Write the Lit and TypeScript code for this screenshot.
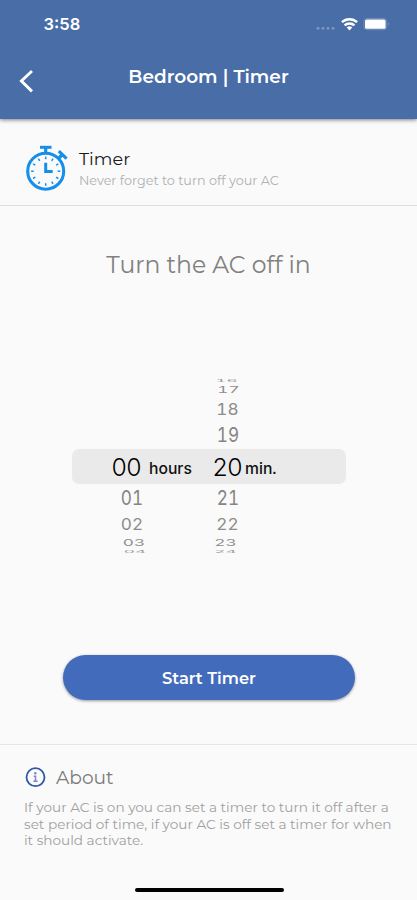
import { LitElement, html, css, svg } from "lit";
import { customElement } from "lit/decorators.js";

interface WheelItem {
  label: string;
  height: number;
  size: number;
  squash: number;
  shift: number;
  tone: string;
}

const item = (label: string, depth: number, shift = 0): WheelItem => {
  const steps = [
    { height: 28, size: 17.2, squash: 1.17, tone: "#858585" },
    { height: 24, size: 17.2, squash: 0.95, tone: "#8c8c8c" },
    { height: 14, size: 17.2, squash: 0.55, tone: "#8e8e8e" },
    { height: 4, size: 17.2, squash: 0.2, tone: "#9a9a9a" },
  ];
  return { label, shift, ...steps[depth] };
};

const minutesAbove = [item("16", 3, -1.5), item("17", 2, 0.5), item("18", 1, -0.5), item("19", 0)];
const hoursBelow = [item("01", 0), item("02", 1), item("03", 2, 2), item("04", 3, 3)];
const minutesBelow = [item("21", 0), item("22", 1, -0.5), item("23", 2, -2.5), item("24", 3, -2.5)];

@customElement("app-header")
class AppHeader extends LitElement {
  static styles = css`
    :host {
      display: block;
      height: 119px;
      background: #486da7;
      color: #fff;
      box-shadow: 0 1px 4px rgba(0, 0, 0, 0.5);
    }
    .status {
      display: flex;
      align-items: center;
      height: 48px;
      padding: 0 27px 0 43.5px;
      box-sizing: border-box;
    }
    .clock {
      flex: 1;
      font-family: Inter, "Liberation Sans", sans-serif;
      font-size: 16.5px;
      font-weight: 600;
      line-height: 20px;
    }
    .icons {
      display: block;
    }
    .bar {
      display: grid;
      grid-template-columns: 48px 1fr 48px;
      align-items: center;
      height: 56px;
    }
    .back {
      display: block;
      margin: 10px 0 0 18px;
    }
    .title {
      margin: 1px 0 0;
      text-align: center;
      font-size: 18.5px;
      font-weight: 600;
      line-height: 24px;
      white-space: nowrap;
    }
  `;
  render() {
    return html`
      <div class="status">
        <span class="clock">3:58</span>
        <svg class="icons" width="76" height="16" viewBox="0 0 76 16">
          <g fill="#fff" fill-opacity=".28">
            <circle cx="4" cy="12.3" r="1.5" /><circle cx="9" cy="12.3" r="1.5" />
            <circle cx="14" cy="12.3" r="1.5" /><circle cx="19" cy="12.3" r="1.5" />
          </g>
          <g fill="none" stroke="#fff" stroke-width="2.5">
            <path d="M27.9 6.2a11 11 0 0 1 15.2 0" />
            <path d="M30.6 9.4a7 7 0 0 1 9.8 0" />
          </g>
          <path d="M35.5 14.6l-2.8-3a4 4 0 0 1 5.6 0z" fill="#fff" />
          <rect x="49.9" y="2.5" width="22.8" height="11.2" rx="3" fill="none" stroke="#fff" stroke-opacity=".22" />
          <rect x="51" y="3.6" width="20.6" height="9.2" rx="1.6" fill="#fff" />
          <path d="M74 6.2q1.4 2 0 4z" fill="#fff" fill-opacity=".5" />
        </svg>
      </div>
      <div class="bar">
        <svg class="back" width="18" height="26" viewBox="0 0 18 26">
          <path d="M14 3 3.4 13 14 23.4" fill="none" stroke="#fff" stroke-width="2.9" />
        </svg>
        <h1 class="title">Bedroom | Timer</h1>
      </div>
    `;
  }
}

@customElement("time-wheel")
class TimeWheel extends LitElement {
  static styles = css`
    :host {
      display: block;
      font-family: Inter, "Liberation Sans", sans-serif;
      font-variant-numeric: tabular-nums;
    }
    .pair {
      display: grid;
      grid-template-columns: 60px 60px;
      column-gap: 36px;
      padding-left: 102px;
      height: 70px;
    }
    .drum {
      display: flex;
      flex-direction: column;
    }
    .item {
      display: flex;
      align-items: center;
      justify-content: center;
      line-height: 1;
    }
    .band {
      display: flex;
      align-items: center;
      height: 35px;
      margin: 0 71px 0 72px;
      border-radius: 7px;
      background: #eaeaea;
      color: #111;
      white-space: nowrap;
    }
    .value {
      width: 32px;
      font-size: 24.5px;
      font-weight: 300;
      letter-spacing: -1px;
      text-align: center;
      color: #000;
    }
    .hours {
      margin-left: 38px;
    }
    .unit {
      font-size: 15.7px;
      font-weight: 500;
      margin-top: 3px;
    }
    .unit-h {
      width: 57px;
      margin-left: 7px;
    }
    .unit-m {
      margin-left: 4px;
    }
    .minutes {
      margin-left: 5px;
      margin-right: -2px;
    }
  `;
  private drum(items: WheelItem[]) {
    return html`<div class="drum">
      ${items.map(
        (i) => html`<div
          class="item"
          style="height:${i.height}px;font-size:${i.size}px;color:${i.tone};transform:translateX(${i.shift}px) scaleY(${i.squash})"
        >
          ${i.label}
        </div>`
      )}
    </div>`;
  }
  render() {
    return html`
      <div class="pair">${this.drum([])}${this.drum(minutesAbove)}</div>
      <div class="band">
        <span class="value hours">00</span><span class="unit unit-h">hours</span>
        <span class="value minutes">20</span><span class="unit unit-m">min.</span>
      </div>
      <div class="pair">${this.drum(hoursBelow)}${this.drum(minutesBelow)}</div>
    `;
  }
}

@customElement("app-root")
class AppRoot extends LitElement {
  static styles = css`
    :host {
      display: flex;
      flex-direction: column;
      height: 900px;
      overflow: hidden;
      background: #fafafa;
      font-family: Montserrat, Inter, "Open Sans", sans-serif;
    }
    app-header,
    .intro,
    .picker,
    .about {
      flex: none;
    }
    .intro {
      display: flex;
      height: 87px;
      box-sizing: border-box;
      padding: 26px 0 0 24px;
      border-bottom: 1px solid #dedede;
    }
    .watch {
      display: block;
      flex: none;
    }
    .intro-text {
      padding: 3px 0 0 10px;
      white-space: nowrap;
    }
    .intro-title {
      font-size: 17.6px;
      line-height: 22px;
      color: #1b1b1b;
    }
    .intro-sub {
      font-size: 12.75px;
      line-height: 16px;
      margin-top: 3px;
      color: #b0b0b0;
    }
    .picker {
      height: 539px;
      box-sizing: border-box;
      padding-top: 43px;
      border-bottom: 1px solid #e6e6e6;
    }
    .prompt {
      margin: 0;
      text-align: center;
      font-size: 23.5px;
      font-weight: 400;
      line-height: 32px;
      color: #808080;
    }
    .wheel {
      margin-top: 98px;
    }
    .start {
      display: block;
      width: 292px;
      height: 45px;
      margin: 101px 0 0 63px;
      border: 0;
      border-radius: 23px;
      background: #426cbb;
      box-shadow: 0 1px 3px rgba(0, 0, 0, 0.4);
      color: #fff;
      font: 600 16.3px/20px Montserrat, Inter, sans-serif;
    }
    .about {
      padding: 20px 20px 0 24px;
      height: 143px;
      box-sizing: border-box;
    }
    .about-head {
      display: flex;
      align-items: center;
      gap: 9px;
      height: 24px;
      font-size: 18.6px;
      color: #7b7b7b;
    }
    .about-text {
      margin: 10px 0 0;
      font-size: 13.62px;
      line-height: 16.7px;
      color: #a0a0a0;
      white-space: nowrap;
    }
    .home {
      width: 149px;
      height: 4px;
      margin: 0 0 0 135px;
      border-radius: 2px;
      background: #000;
    }
  `;
  private ticks() {
    return Array.from({ length: 12 }, (_, n) => n).map(
      (n) => svg`<path d="M21.7 11.6v2.6" transform="rotate(${n * 30} 21.7 26.2)" />`
    );
  }
  render() {
    return html`
      <app-header></app-header>
      <section class="intro">
        <svg class="watch" width="45" height="50" viewBox="0 0 45 50">
          <g fill="none" stroke="#178fea">
            <circle cx="21.7" cy="26.2" r="18" stroke-width="3.1" />
            <path d="M16 2.3h11.5" stroke-width="3" />
            <path d="M21.7 3v6" stroke-width="3.2" />
            <path d="M34.2 13.8l4-4" stroke-width="3.4" />
            <path d="M34.8 6.2 42.6 13.6" stroke-width="3.2" />
            <g stroke-width="1.5">${this.ticks()}</g>
            <path d="M21.7 17.7v8.7h7" stroke-width="3" />
          </g>
        </svg>
        <div class="intro-text">
          <div class="intro-title">Timer</div>
          <div class="intro-sub">Never forget to turn off your AC</div>
        </div>
      </section>
      <section class="picker">
        <h2 class="prompt">Turn the AC off in</h2>
        <time-wheel class="wheel"></time-wheel>
        <button class="start">Start Timer</button>
      </section>
      <section class="about">
        <div class="about-head">
          <svg width="23" height="23" viewBox="0 0 23 23">
            <circle cx="11.5" cy="11.2" r="9" fill="none" stroke="#3258a6" stroke-width="1.8" />
            <circle cx="11.3" cy="7.2" r="1.2" fill="#7d86c8" />
            <path d="M9.7 10.3h1.8v5.2M9.4 15.3h4.2" fill="none" stroke="#7d86c8" stroke-width="1.5" />
          </svg>
          <span>About</span>
        </div>
        <p class="about-text">
          If your AC is on you can set a timer to turn it off after a<br />set period of time, if your AC is off set a
          timer for when<br />it should activate.
        </p>
      </section>
      <div class="home"></div>
    `;
  }
}
